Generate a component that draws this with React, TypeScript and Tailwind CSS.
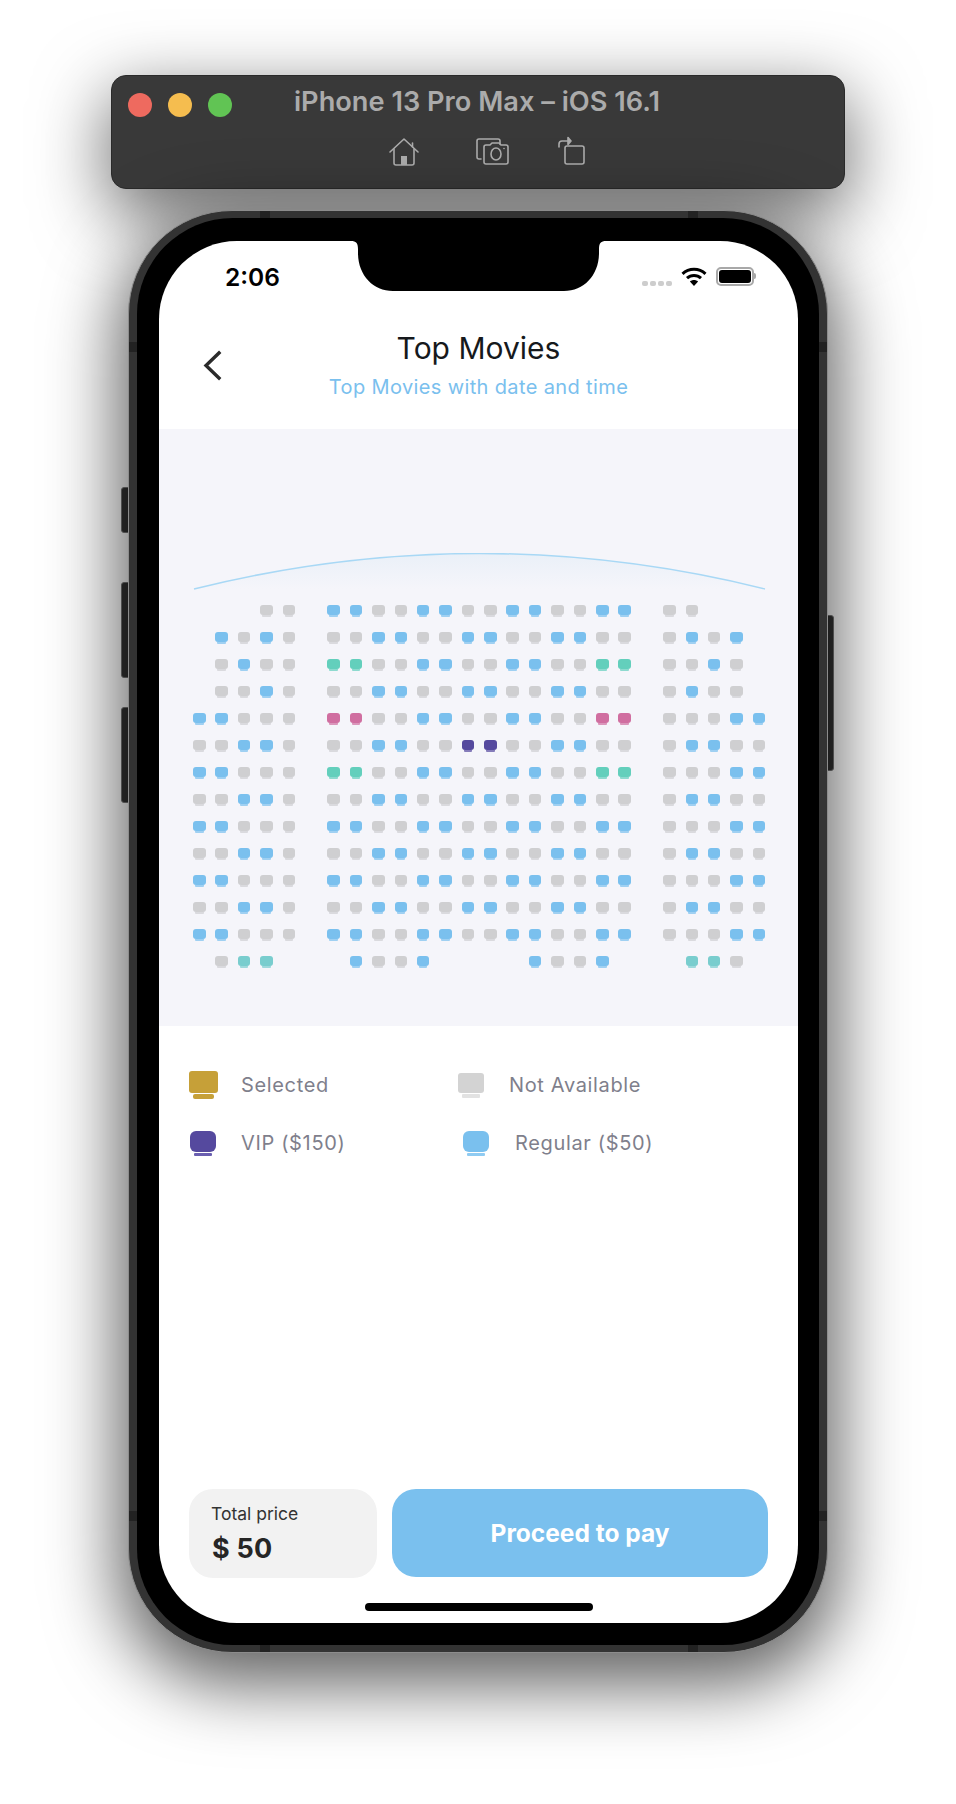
// Seat picker screen inside an iOS simulator window
const evenRow = 'BBGGG.BBGGBBGGBBGGBB.GGGBB'
const oddRow = 'GGBBG.GGBBGGBBGGBBGG.GBBGG'

const rows: string[] = [
  '...GG.BBGGBBGGBBGGBB.GG...',
  '.BGBG.GGBBGGBBGGBBGG.GBGB.',
  '.GBGG.TTGGBBGGBBGGTT.GGBG.',
  '.GGBG.GGBBGGBBGGBBGG.GBGG.',
  'BBGGG.PPGGBBGGBBGGPP.GGGBB',
  'GGBBG.GGBBGGVVGGBBGG.GBBGG',
  'BBGGG.TTGGBBGGBBGGTT.GGGBB',
  oddRow,
  evenRow,
  oddRow,
  evenRow,
  oddRow,
  evenRow,
  '.GCC...BGGB....BGGB...CCG.',
]

const seatColors: Record<string, string> = {
  B: 'bg-[#7ac0ee]',
  G: 'bg-[#cfcfd1]',
  T: 'bg-[#63cfbc]',
  C: 'bg-[#79cdce]',
  P: 'bg-[#d06ea0]',
  V: 'bg-[#55499e]',
}

function Seat({ type }: { type: string }) {
  if (type === '.') return <div />
  const color = seatColors[type]
  return (
    <div className="flex w-[12.5px] flex-col items-center blur-[0.6px]">
      <div className={`h-[9.5px] w-full rounded-[3px] ${color}`} />
      <div className={`h-[2.5px] w-[8.5px] rounded-b-[1px] opacity-70 ${color}`} />
    </div>
  )
}

function HomeIcon() {
  return (
    <svg width="30" height="28" viewBox="0 0 30 28" fill="none" stroke="#acacac" strokeWidth="1.6" strokeLinecap="round" strokeLinejoin="round">
      <path d="M1 14 15 1l14 13" />
      <path d="M23.5 5V9" />
      <path d="M5 11v14a2 2 0 0 0 2 2h16a2 2 0 0 0 2-2V11" />
      <rect x="12" y="18" width="6" height="9" fill="#acacac" stroke="none" />
    </svg>
  )
}

function CameraIcon() {
  return (
    <svg width="33" height="27" viewBox="0 0 33 27" fill="none" stroke="#acacac" strokeWidth="1.6" strokeLinecap="round" strokeLinejoin="round">
      <path d="M5 21H3a2 2 0 0 1-2-2V3a2 2 0 0 1 2-2h19a2 2 0 0 1 2 2v3" />
      <path d="M8 9a2 2 0 0 1 2-2h4l2-2h7l2 2h5a2 2 0 0 1 2 2v15a2 2 0 0 1-2 2H10a2 2 0 0 1-2-2z" />
      <ellipse cx="20" cy="16" rx="5" ry="6" />
      <circle cx="28" cy="10.5" r="0.8" fill="#acacac" stroke="none" />
    </svg>
  )
}

function RotateIcon() {
  return (
    <svg width="27" height="29" viewBox="0 0 27 29" fill="none" stroke="#acacac" strokeWidth="1.6" strokeLinecap="round" strokeLinejoin="round">
      <rect x="7" y="10" width="19" height="18" rx="2" />
      <path d="M1 11V8a3 3 0 0 1 3-3h6" />
      <path d="M10 1.5 13 5l-3 3.5z" fill="#acacac" />
    </svg>
  )
}

function WifiIcon() {
  return (
    <svg width="26" height="19" viewBox="0 0 26 19" fill="none" stroke="#000" strokeWidth="3">
      <path d="M1.5 6.8C8 .7 18 .7 24.5 6.8" />
      <path d="M6 11.2c4-3.7 10-3.7 14 0" />
      <path d="M13 19 8.9 14.6c2.4-2 5.8-2 8.2 0z" fill="#000" stroke="none" />
    </svg>
  )
}

function LegendItem({ body, base, label, iconClass, gap }: { body: string; base: string; label: string; iconClass: string; gap: string }) {
  return (
    <div className={`flex h-[32px] items-center ${gap}`}>
      <div className={`flex flex-col items-center blur-[0.3px] ${iconClass}`}>
        <div className={`w-full ${body}`} />
        <div className={base} />
      </div>
      <span className="text-[20px] leading-none tracking-[0.65px] text-[#7f7f8c]">{label}</span>
    </div>
  )
}

export default function App() {
  return (
    <div className="flex min-h-[1804px] flex-col items-center bg-white pt-[75px] font-['Inter',sans-serif]">
      {/* simulator toolbar */}
      <div className="h-[114px] w-[734px] rounded-[15px] border border-[#2a2a2a] bg-[#393939] shadow-[0_22px_70px_4px_rgba(0,0,0,0.56)]">
        <div className="flex h-[56px] items-center pl-[16px] pt-[2px]">
          <div className="h-[24px] w-[24px] rounded-full bg-[#ee6a5f]" />
          <div className="ml-[16px] h-[24px] w-[24px] rounded-full bg-[#f5bd4f]" />
          <div className="ml-[16px] h-[24px] w-[24px] rounded-full bg-[#61c454]" />
          <span className="mb-[6px] ml-[62px] text-[27.2px] font-semibold leading-none text-[#ababab]">iPhone 13 Pro Max – iOS 16.1</span>
        </div>
        <div className="flex items-start pl-[277px] pt-[6px]">
          <HomeIcon />
          <div className="ml-[57px]"><CameraIcon /></div>
          <div className="-mt-[2px] ml-[49px]"><RotateIcon /></div>
        </div>
      </div>

      {/* phone */}
      <div className="relative mt-[21px] w-[700px]">
        <div className="absolute -left-[7px] top-[277px] h-[46px] w-[10px] rounded-l-[3px] border border-[#777] bg-[#333]" />
        <div className="absolute -left-[7px] top-[372px] h-[96px] w-[10px] rounded-l-[3px] border border-[#777] bg-[#333]" />
        <div className="absolute -left-[7px] top-[497px] h-[96px] w-[10px] rounded-l-[3px] border border-[#777] bg-[#333]" />
        <div className="absolute -right-[6px] top-[405px] h-[156px] w-[10px] rounded-r-[3px] border border-[#777] bg-[#333]" />

        <div className="relative h-[1443px] rounded-[104px] border border-[#8c8c8c] bg-[#333] px-[8px] py-[7px] shadow-[0_22px_70px_10px_rgba(0,0,0,0.62)]">
          {/* antenna bands */}
          <div className="absolute left-[131px] top-0 h-[7px] w-[10px] bg-[#222]" />
          <div className="absolute left-[559px] top-0 h-[7px] w-[10px] bg-[#222]" />
          <div className="absolute bottom-0 left-[131px] h-[7px] w-[10px] bg-[#222]" />
          <div className="absolute bottom-0 left-[559px] h-[7px] w-[10px] bg-[#222]" />
          <div className="absolute left-0 top-[131px] h-[10px] w-[8px] bg-[#222]" />
          <div className="absolute right-0 top-[131px] h-[10px] w-[8px] bg-[#222]" />
          <div className="absolute bottom-[131px] left-0 h-[10px] w-[8px] bg-[#222]" />
          <div className="absolute bottom-[131px] right-0 h-[10px] w-[8px] bg-[#222]" />

          <div className="relative h-full rounded-[96px] bg-black pb-[22px] pl-[22px] pr-[21px] pt-[23px]">
            <div className="relative flex h-full flex-col overflow-hidden rounded-[78px] bg-white">
              {/* notch */}
              <svg className="absolute left-[192px] top-0" width="255" height="50" viewBox="0 0 255 50" fill="#000">
                <path d="M0 0C5 0 7 2 7 8V12C7 34 22 50 42 50H213C233 50 248 34 248 12V8C248 2 250 0 255 0Z" />
              </svg>

              {/* status bar */}
              <div className="flex h-[64px] shrink-0 items-start justify-between pl-[66px] pr-[42px] pt-[21px]">
                <span className="text-[24.5px] font-semibold leading-[30px] text-black">2:06</span>
                <div className="flex items-start pt-[5px]">
                  <div className="mt-[14px] flex gap-[2px]">
                    <div className="h-[5px] w-[6px] rounded-[2px] bg-[#cdcdcd]" />
                    <div className="h-[5px] w-[6px] rounded-[2px] bg-[#cdcdcd]" />
                    <div className="h-[5px] w-[6px] rounded-[2px] bg-[#cdcdcd]" />
                    <div className="h-[5px] w-[6px] rounded-[2px] bg-[#cdcdcd]" />
                  </div>
                  <div className="ml-[9px]"><WifiIcon /></div>
                  <div className="ml-[9px] flex h-[19px] w-[38px] rounded-[5px] border-2 border-[#a8a8a8] p-px">
                    <div className="flex-1 rounded-[3px] bg-black" />
                  </div>
                  <div className="mt-[6px] h-[6px] w-[2px] rounded-r-[2px] bg-[#a8a8a8]" />
                </div>
              </div>

              {/* header */}
              <div className="grid h-[124px] shrink-0 grid-cols-[1fr_auto_1fr] pt-[25px]">
                <div className="pl-[44px] pt-[20px]">
                  <svg width="19" height="31" viewBox="0 0 19 31" fill="none" stroke="#2b2b2b" strokeWidth="3.4" strokeLinecap="square">
                    <path d="M16 3 3 15.5 16 28" />
                  </svg>
                </div>
                <div className="flex flex-col items-center">
                  <span className="text-[30px] leading-[36px] text-[#16191c]">Top Movies</span>
                  <span className="mt-[7px] text-[20px] leading-[28px] tracking-[0.37px] text-[#7ac0ee]">Top Movies with date and time</span>
                </div>
              </div>

              {/* seat map */}
              <div className="h-[597px] shrink-0 bg-[#f5f5fa] pl-[34px] pt-[124px]">
                <svg className="block" width="574" height="52" viewBox="0 0 574 52" fill="none">
                  <defs>
                    <linearGradient id="glow" x1="0" y1="0" x2="0" y2="1">
                      <stop offset="0" stopColor="#eaf0f8" />
                      <stop offset="1" stopColor="#f5f5fa" />
                    </linearGradient>
                  </defs>
                  <path d="M1 36Q286 -35 572 36Z" fill="url(#glow)" />
                  <path d="M1 36Q286 -35 572 36" stroke="#a8d8f5" strokeWidth="1.5" />
                </svg>
                <div className="grid grid-cols-[repeat(26,22.4px)] auto-rows-[27px]">
                  {rows.flatMap((row, r) =>
                    row.split('').map((type, c) => <Seat key={`${r}-${c}`} type={type} />),
                  )}
                </div>
              </div>

              {/* legend */}
              <div className="grid shrink-0 grid-cols-[269px_1fr] gap-y-[26px] pl-[30px] pt-[43px]">
                <LegendItem label="Selected" gap="gap-[23px]" iconClass="w-[29px]" body="h-[22px] rounded-[3px] bg-[#c6a038]" base="mt-[1px] h-[5px] w-[21px] rounded-[2px] bg-[#c6a038]" />
                <LegendItem label="Not Available" gap="gap-[25px]" iconClass="w-[26px]" body="h-[20px] rounded-[3px] bg-[#d3d3d3]" base="mt-[1px] h-[4px] w-[18px] rounded-[1px] bg-[#e2e2e2]" />
                <LegendItem label="VIP ($150)" gap="gap-[25px] pl-px" iconClass="w-[26px]" body="h-[21px] rounded-[6px] bg-[#55499e]" base="mt-[1px] h-[3px] w-[18px] rounded-[1px] bg-[#6a5fb0]" />
                <LegendItem label="Regular ($50)" gap="gap-[26px] pl-[5px]" iconClass="w-[26px]" body="h-[21px] rounded-[6px] bg-[#7ac0ee]" base="mt-[1px] h-[3px] w-[18px] rounded-[1px] bg-[#8fcbf2]" />
              </div>

              {/* footer */}
              <div className="mt-auto flex gap-[15px] pl-[30px] pr-[30px]">
                <div className="flex h-[89px] w-[188px] flex-col rounded-[24px] bg-[#f2f2f2] pl-[22px] pt-[15px]">
                  <span className="text-[17.5px] leading-[20px] text-[#333]">Total price</span>
                  <span className="ml-px mt-[9px] text-[27px] font-bold leading-[32px] tracking-[0.2px] text-[#262626]">$ 50</span>
                </div>
                <button className="h-[88px] flex-1 rounded-[24px] bg-[#7ac0ee] pt-px text-[24.5px] font-bold text-white">Proceed to pay</button>
              </div>
              <div className="mx-auto mb-[12px] mt-[25px] h-[8px] w-[228px] rounded-full bg-black" />
            </div>
          </div>
        </div>
      </div>
    </div>
  )
}
